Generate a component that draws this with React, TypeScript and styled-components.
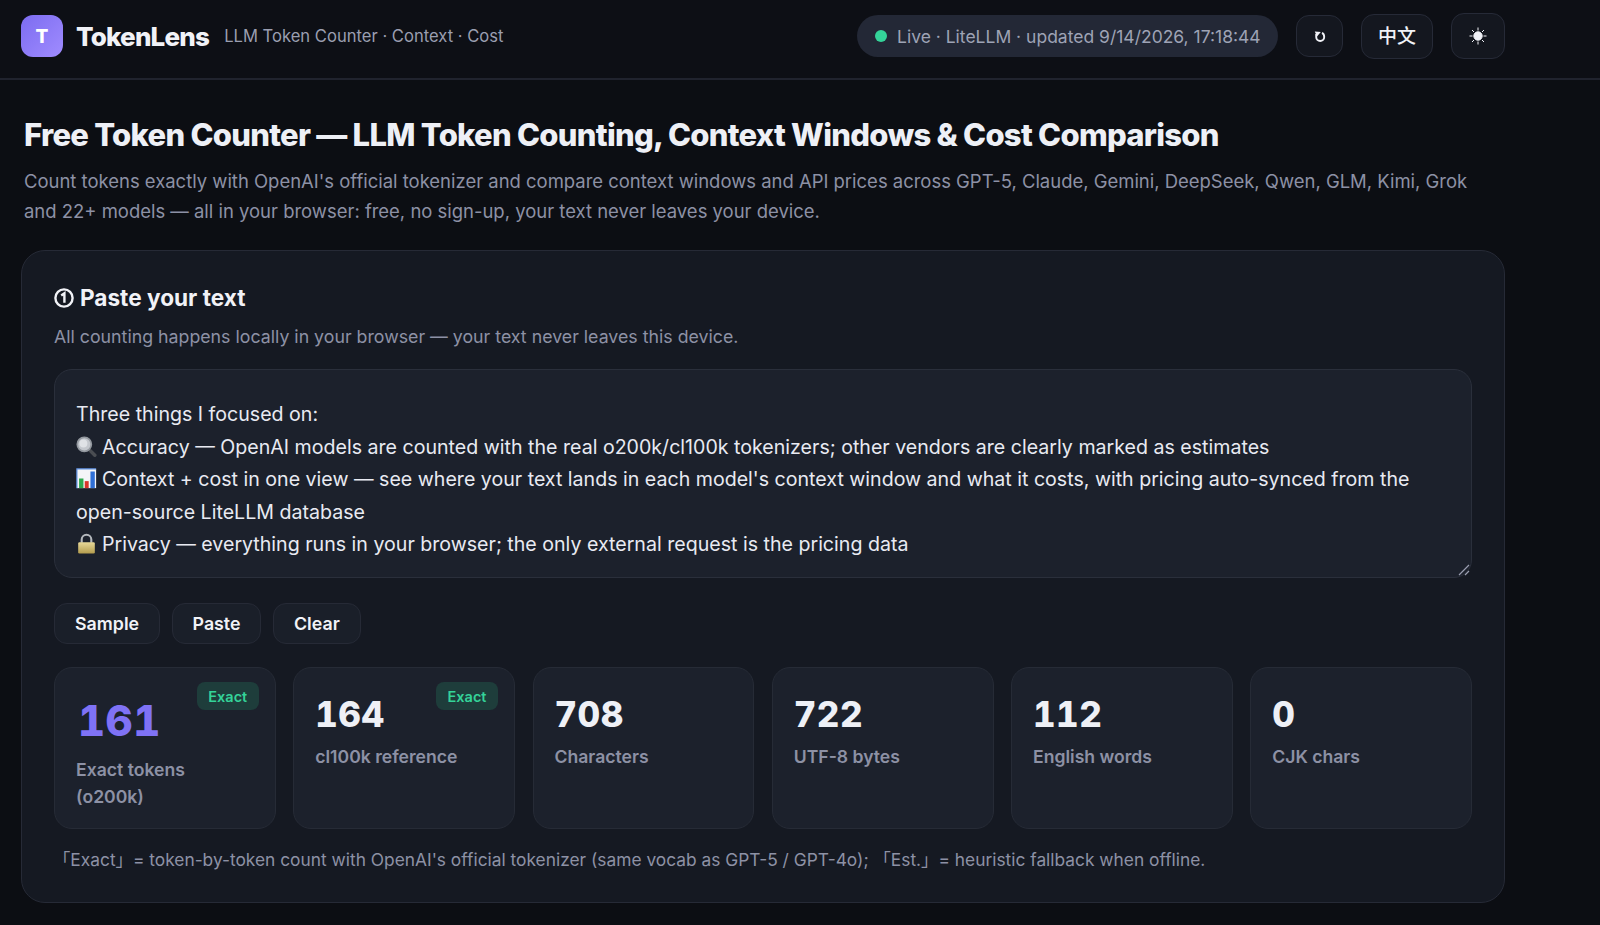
import React from 'react';
import styled, { createGlobalStyle } from 'styled-components';

const GlobalStyle = createGlobalStyle`
  * {
    box-sizing: border-box;
  }

  html, body {
    margin: 0;
    background: #0c0e13;
    color: #e8eaf2;
    font-family: Inter, "Noto Sans", sans-serif;
  }
`;

const Page = styled.div`
  width: 1600px;
  height: 925px;
  overflow: hidden;
`;

const Header = styled.header`
  height: 80px;
  padding: 0 95px 6px 21px;
  display: flex;
  align-items: center;
  justify-content: space-between;
  border-bottom: 2px solid #20232e;
  background: #0d0f15;
`;

const Brand = styled.div`
  display: flex;
  align-items: center;
`;

const Logo = styled.div`
  width: 42px;
  height: 42px;
  border-radius: 12px;
  background: linear-gradient(135deg, #7c6cf0, #a08cff);
  color: #fff;
  display: flex;
  align-items: center;
  justify-content: center;
  font-size: 19px;
  font-weight: 800;
  margin-right: 13px;
`;

const BrandName = styled.div`
  font-size: 26px;
  font-weight: 800;
  letter-spacing: -0.8px;
  color: #f1f2f7;
  margin-right: 15px;
`;

const Tagline = styled.div`
  font-size: 16.6px;
  color: #9a9eb0;
`;

const Actions = styled.div`
  display: flex;
  align-items: center;
  gap: 18px;
`;

const LivePill = styled.div`
  width: 421px;
  height: 42px;
  border-radius: 21px;
  background: #232836;
  display: flex;
  align-items: center;
  padding-left: 18px;
  gap: 10px;
  font-size: 17.5px;
  color: #9ea3b5;
`;

const LiveDot = styled.span`
  width: 12px;
  height: 12px;
  border-radius: 50%;
  background: #34d399;
`;

const HeaderButton = styled.button<{ $w: number; $h: number }>`
  width: ${p => p.$w}px;
  height: ${p => p.$h}px;
  border: 1.5px solid #262a37;
  border-radius: 13px;
  background: #14171f;
  color: #f1f2f7;
  font-family: Inter, "Noto Sans CJK SC", sans-serif;
  font-size: 19px;
  font-weight: 500;
  display: flex;
  align-items: center;
  justify-content: center;
  padding: 0;
`;

const LangButton = styled(HeaderButton)`
  padding-bottom: 3px;
`;

const Main = styled.main`
  padding: 0 95px 0 21px;
`;

const Title = styled.h1`
  margin: 36px 0 0 3px;
  font-size: 31px;
  line-height: 38px;
  font-weight: 800;
  letter-spacing: -0.72px;
  color: #eef0f6;
`;

const Lead = styled.p`
  margin: 13px 0 0 3px;
  max-width: 1460px;
  font-size: 18.47px;
  line-height: 29.5px;
  color: #8d91a5;
`;

const Card = styled.section`
  margin-top: 24px;
  height: 653px;
  padding: 32px 32px 0;
  border: 1.5px solid #262a36;
  border-radius: 24px;
  background: #151922;
`;

const CardTitle = styled.h2`
  margin: 0;
  display: flex;
  align-items: center;
  gap: 6px;
  font-size: 22.6px;
  line-height: 30px;
  font-weight: 700;
  color: #f1f2f7;
`;

const StepMark = styled.svg`
  width: 20px;
  height: 20px;
`;

const CardHint = styled.p`
  margin: 11px 0 0;
  font-size: 17.75px;
  line-height: 26px;
  color: #8d91a5;
`;

const TextBox = styled.div`
  position: relative;
  margin-top: 19px;
  height: 209px;
  padding: 28px 21px 0;
  border: 1.5px solid #2a2f3b;
  border-radius: 18px;
  background: #1c212c;
  font-size: 19.6px;
  line-height: 32.6px;
  color: #e8eaf2;
`;

const Emoji = styled.svg`
  width: 21px;
  height: 21px;
  vertical-align: -3px;
  margin-right: 5px;
`;

const ResizeGrip = styled.svg`
  position: absolute;
  right: 1px;
  bottom: 1px;
  width: 14px;
  height: 14px;
`;

const ButtonRow = styled.div`
  display: flex;
  gap: 11.5px;
  margin-top: 25px;
`;

const ToolButton = styled.button`
  height: 41px;
  padding: 0 20px;
  border: 1.5px solid #262a36;
  border-radius: 13px;
  background: #1a1f29;
  color: #f1f2f7;
  font-family: Inter, sans-serif;
  font-size: 17.8px;
  font-weight: 600;
`;

const StatGrid = styled.div`
  display: grid;
  grid-template-columns: repeat(6, 1fr);
  gap: 17.5px;
  margin-top: 23px;
`;

const StatCard = styled.div`
  position: relative;
  height: 162px;
  padding: 25px 21px 0;
  border: 1.5px solid #262b36;
  border-radius: 18px;
  background: #1c212c;
`;

const StatValue = styled.div<{ $accent?: boolean }>`
  font-size: ${p => (p.$accent ? 42 : 35)}px;
  line-height: ${p => (p.$accent ? 56 : 43)}px;
  font-weight: 800;
  letter-spacing: 0.5px;
  font-variant-numeric: tabular-nums;
  color: ${p => (p.$accent ? '#7f72f5' : '#eef0f6')};
  margin-left: ${p => (p.$accent ? 2 : 0)}px;
`;

const StatLabel = styled.div`
  margin-top: 8px;
  font-size: 17.6px;
  line-height: 26.5px;
  font-weight: 600;
  color: #8d91a5;
`;

const Badge = styled.span`
  position: absolute;
  top: 14px;
  right: 16px;
  height: 28px;
  width: 62px;
  border-radius: 8px;
  background: #1e3d3b;
  color: #34d399;
  font-size: 14.5px;
  font-weight: 600;
  display: flex;
  align-items: center;
  justify-content: center;
`;

const Footnote = styled.p`
  margin: 18px 0 0 -1px;
  font-family: Inter, "Noto Sans CJK SC", sans-serif;
  font-size: 17.35px;
  line-height: 26px;
  color: #8d91a5;
`;

const stats = [
  { value: '161', label: 'Exact tokens (o200k)', exact: true, accent: true },
  { value: '164', label: 'cl100k reference', exact: true },
  { value: '708', label: 'Characters' },
  { value: '722', label: 'UTF-8 bytes' },
  { value: '112', label: 'English words' },
  { value: '0', label: 'CJK chars' },
];

const RefreshIcon = () => (
  <svg width="14" height="14" viewBox="0 0 14 14" fill="none">
    <path d="M3.2 5 V8 A4 4 0 0 0 11.2 8 C11.2 6 10.4 4.4 9 3.8" stroke="#f1f2f7" strokeWidth="1.9" />
    <path d="M1.8 2.6 L7.8 3 L4 7.6 Z" fill="#f1f2f7" />
  </svg>
);

const SunIcon = () => (
  <svg width="20" height="20" viewBox="0 0 20 20" stroke="#f1f2f7" strokeWidth="1">
    <circle cx="10" cy="10" r="4.2" fill="#f1f2f7" />
    <path d="M10 1.5V4.5M10 15.5V18.5M1.5 10H4.5M15.5 10H18.5M4 4L6 6M14 14L16 16M16 4L14 6M6 14L4 16" />
  </svg>
);

const SearchEmoji = () => (
  <Emoji viewBox="0 0 24 24">
    <path d="M14.5 15 L21.5 22" stroke="#4a4d52" strokeWidth="4" strokeLinecap="round" />
    <circle cx="9.5" cy="9.5" r="8" fill="#c3c7cd" stroke="#93989f" strokeWidth="2" />
    <circle cx="8.5" cy="8.5" r="4.5" fill="#dfe2e6" />
  </Emoji>
);

const ChartEmoji = () => (
  <Emoji viewBox="0 0 24 24">
    <rect x="1" y="1" width="22" height="22" fill="#f4f5f7" />
    <path d="M1 23V1H23" fill="none" stroke="#5c8fe0" strokeWidth="1.4" />
    <rect x="3.5" y="12" width="5" height="11" fill="#2fa84f" />
    <rect x="10" y="15" width="4.5" height="8" fill="#d9352b" />
    <rect x="16.5" y="4" width="5" height="19" fill="#2f6fd6" />
  </Emoji>
);

const LockEmoji = () => (
  <Emoji viewBox="0 0 24 24">
    <defs>
      <linearGradient id="lockBody" x1="0" y1="0" x2="0" y2="1">
        <stop offset="0" stopColor="#e8d999" />
        <stop offset="1" stopColor="#b39c4d" />
      </linearGradient>
    </defs>
    <path d="M6.5 11 V7.5 a5.5 5.5 0 0 1 11 0 V11" fill="none" stroke="#b4b8bd" strokeWidth="2.4" />
    <rect x="2.5" y="10.5" width="19" height="13" rx="1.5" fill="url(#lockBody)" />
  </Emoji>
);

export default function App() {
  return (
    <Page>
      <GlobalStyle />
      <Header>
        <Brand>
          <Logo>T</Logo>
          <BrandName>TokenLens</BrandName>
          <Tagline>LLM Token Counter · Context · Cost</Tagline>
        </Brand>
        <Actions>
          <LivePill>
            <LiveDot />
            Live · LiteLLM · updated 9/14/2026, 17:18:44
          </LivePill>
          <HeaderButton $w={47} $h={42}><RefreshIcon /></HeaderButton>
          <LangButton $w={72} $h={45}>中文</LangButton>
          <HeaderButton $w={54} $h={46}><SunIcon /></HeaderButton>
        </Actions>
      </Header>
      <Main>
        <Title>Free Token Counter — LLM Token Counting, Context Windows &amp; Cost Comparison</Title>
        <Lead>
          Count tokens exactly with OpenAI's official tokenizer and compare context windows and API prices across GPT-5, Claude, Gemini, DeepSeek, Qwen, GLM, Kimi, Grok and 22+ models — all in your browser: free, no sign-up, your text never leaves your device.
        </Lead>
        <Card>
          <CardTitle>
            <StepMark viewBox="0 0 20 20" fill="none">
              <circle cx="10" cy="10" r="8.6" stroke="#f1f2f7" strokeWidth="2.4" />
              <path d="M7.2 7.6 L10.4 5.4 V14.8" stroke="#f1f2f7" strokeWidth="2.4" />
            </StepMark>
            Paste your text
          </CardTitle>
          <CardHint>All counting happens locally in your browser — your text never leaves this device.</CardHint>
          <TextBox>
            Three things I focused on:
            <br />
            <SearchEmoji />Accuracy — OpenAI models are counted with the real o200k/cl100k tokenizers; other vendors are clearly marked as estimates
            <br />
            <ChartEmoji />Context + cost in one view — see where your text lands in each model's context window and what it costs, with pricing auto-synced from the open-source LiteLLM database
            <br />
            <LockEmoji />Privacy — everything runs in your browser; the only external request is the pricing data
            <ResizeGrip viewBox="0 0 14 14">
              <path d="M3 13 L13 3 M9 13 L13 9" stroke="#9a9eb0" strokeWidth="1.2" />
            </ResizeGrip>
          </TextBox>
          <ButtonRow>
            <ToolButton>Sample</ToolButton>
            <ToolButton>Paste</ToolButton>
            <ToolButton>Clear</ToolButton>
          </ButtonRow>
          <StatGrid>
            {stats.map(s => (
              <StatCard key={s.label}>
                <StatValue $accent={s.accent}>{s.value}</StatValue>
                <StatLabel>{s.label}</StatLabel>
                {s.exact && <Badge>Exact</Badge>}
              </StatCard>
            ))}
          </StatGrid>
          <Footnote>「Exact」= token-by-token count with OpenAI's official tokenizer (same vocab as GPT-5 / GPT-4o); 「Est.」= heuristic fallback when offline.</Footnote>
        </Card>
      </Main>
    </Page>
  );
}
